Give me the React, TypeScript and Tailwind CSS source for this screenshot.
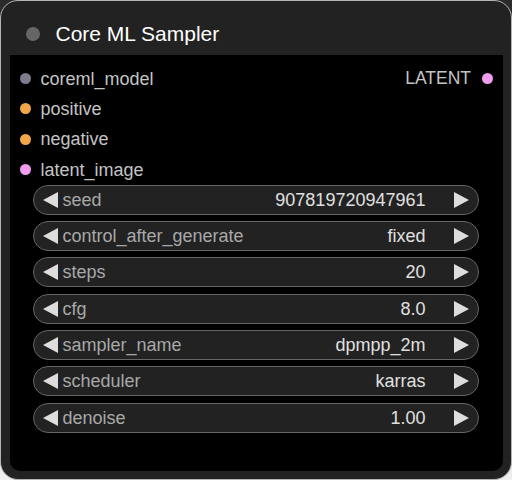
import React from "react";

const inputs = [
  { name: "coreml_model", color: "bg-[#7c7c8c]" },
  { name: "positive", color: "bg-[#f2a64a]" },
  { name: "negative", color: "bg-[#f2a64a]" },
  { name: "latent_image", color: "bg-[#f29cf0]" },
];

const widgets = [
  { label: "seed", value: "907819720947961" },
  { label: "control_after_generate", value: "fixed" },
  { label: "steps", value: "20" },
  { label: "cfg", value: "8.0" },
  { label: "sampler_name", value: "dpmpp_2m" },
  { label: "scheduler", value: "karras" },
  { label: "denoise", value: "1.00" },
];

function Arrow({ dir }: { dir: "left" | "right" }) {
  return (
    <svg width="15" height="16" viewBox="0 0 15 16" className="shrink-0">
      {dir === "left" ? (
        <polygon points="15,0 15,16 0,8" fill="#dddddd" />
      ) : (
        <polygon points="0,0 0,16 15,8" fill="#dddddd" />
      )}
    </svg>
  );
}

export default function App() {
  return (
    <div className="h-[480px] w-[512px] bg-gradient-to-b from-[#2a2a2a] to-[#f0f0f0] font-['Liberation_Sans',Arial,sans-serif]">
      <div className="flex h-full flex-col rounded-[18px] border-[1.5px] border-[#b4b4b4] bg-[#222222] px-[8.5px] pb-[8.5px]">
        {/* Title */}
        <div className="flex h-[53.5px] shrink-0 items-center pt-[12px]">
          <div className="ml-[16px] h-[14px] w-[14px] rounded-full bg-[#666666]" />
          <span className="ml-[16px] text-[21px] leading-none text-white">Core ML Sampler</span>
        </div>

        {/* Body */}
        <div className="flex flex-1 flex-col rounded-b-[10px] bg-black pt-[9px]">
          <div className="relative flex flex-col">
            {inputs.map((inp) => (
              <div key={inp.name} className="flex h-[30.3px] items-center">
                <div className={`ml-[10.5px] h-[11px] w-[11px] rounded-full ${inp.color}`} />
                <span className="ml-[9.5px] text-[18px] leading-none text-[#c4c4c4]">{inp.name}</span>
              </div>
            ))}
            <div className="absolute right-[9.5px] top-0 flex h-[30.3px] items-center">
              <span className="text-[17.5px] leading-none text-[#c4c4c4]">LATENT</span>
              <div className="ml-[11px] h-[11px] w-[11px] rounded-full bg-[#f29cf0]" />
            </div>
          </div>

          <div className="flex flex-col gap-[6.35px] pl-[23px] pr-[24px]">
            {widgets.map((w) => (
              <div
                key={w.label}
                className="flex h-[30px] items-center rounded-full border-[1.5px] border-[#666666] bg-[#222222] pl-[9px] pr-[9px]"
              >
                <Arrow dir="left" />
                <span className="ml-[5px] text-[18px] leading-none text-[#a8a8a8]">{w.label}</span>
                <span className="ml-auto text-[18px] leading-none text-[#e0e0e0]">{w.value}</span>
                <span className="ml-[28px] flex">
                  <Arrow dir="right" />
                </span>
              </div>
            ))}
          </div>
        </div>
      </div>
    </div>
  );
}
